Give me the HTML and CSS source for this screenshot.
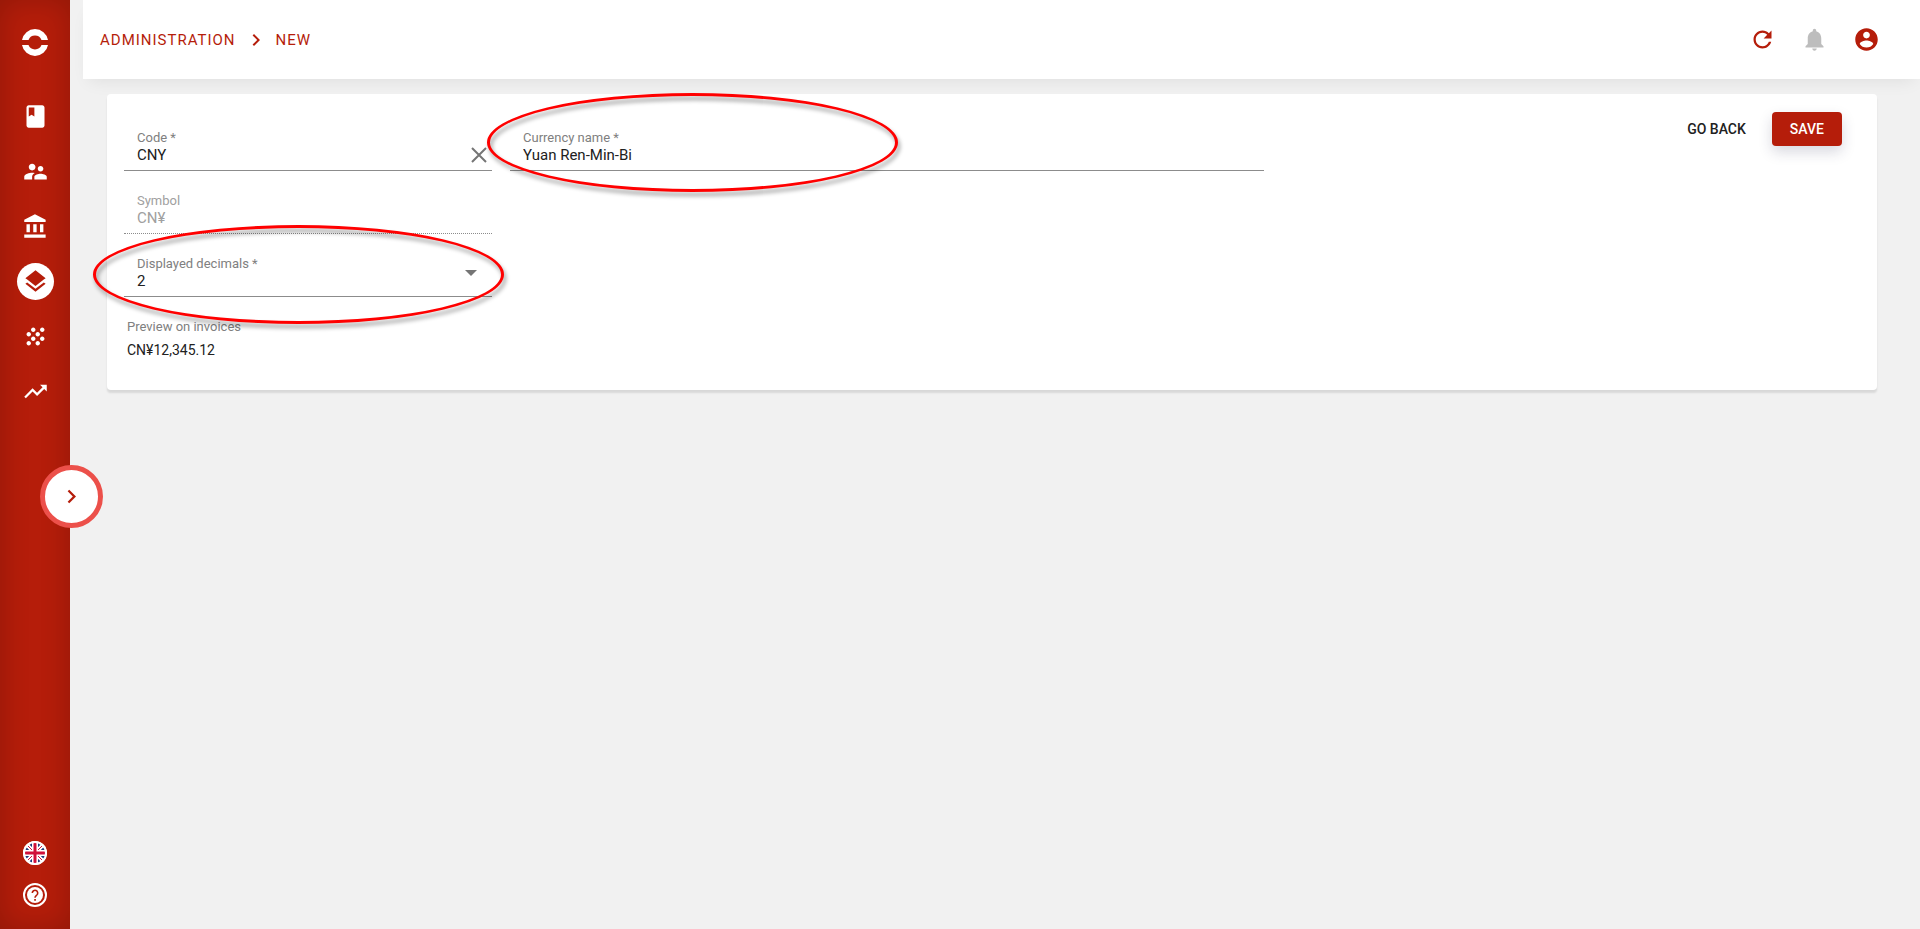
FILE: index.html
```
<!DOCTYPE html>
<html lang="en">
<head>
    <meta charset="UTF-8">
    <title>Administration - New currency</title>
    <link rel="stylesheet" href="styles.css">
</head>
<body>
    <aside class="sidebar">
        <a class="logo" href="#" aria-label="Home">
            <svg viewBox="0 0 28 28"><path d="M1 12a13.2 13.2 0 0 1 26 0h-6.500a7 7 0 0 0-13 0z"/><path d="M1 17a13.200 13.200 0 0 0 26 0h-6.500a7 7 0 0 1-13 0z"/></svg>
        </a>
        <nav class="menu">
            <a href="#" aria-label="Catalog">
                <svg class="icon" viewBox="0 0 24 24"><path fill-rule="evenodd" d="M18 2H6c-1.100 0-2 .9-2 2v16c0 1.100.9 2 2 2h12c1.100 0 2-.9 2-2V4c0-1.100-.9-2-2-2zM6 4h5v8l-2.500-1.500L6 12V4z"/></svg>
            </a>
            <a href="#" aria-label="Customers">
                <svg class="icon" viewBox="0 0 24 24"><path d="M16.500 12c1.380 0 2.490-1.120 2.490-2.500S17.880 7 16.500 7 14 8.120 14 9.500s1.120 2.500 2.500 2.500zM9 11c1.660 0 2.990-1.340 2.990-3S10.660 5 9 5 6 6.340 6 8s1.340 3 3 3zm7.500 3c-1.830 0-5.500.92-5.500 2.750V19h11v-2.250c0-1.830-3.670-2.750-5.500-2.750zM9 13c-2.330 0-7 1.170-7 3.500V19h7v-2.250c0-.85.33-2.340 2.370-3.470C10.500 13.100 9.660 13 9 13z"/></svg>
            </a>
            <a href="#" aria-label="Accounting">
                <svg class="icon" viewBox="0 0 24 24"><path d="M4 10v7h3v-7H4zm6 0v7h3v-7h-3zM2 22h19v-3H2v3zm14-12v7h3v-7h-3zm-4.500-9L2 6v2h19V6l-9.500-5z"/></svg>
            </a>
            <a class="active" href="#" aria-label="Administration">
                <svg class="icon" viewBox="0 0 24 24"><path d="M11.990 18.540l-7.370-5.730L3 14.070l9 7 9-7-1.630-1.270-7.380 5.740zM12 16l7.360-5.730L21 9l-9-7-9 7 1.630 1.270L12 16z"/></svg>
            </a>
            <a href="#" aria-label="Modules">
                <svg class="icon" viewBox="0 0 24 24"><path d="M10 12c-1.100 0-2 .9-2 2s.9 2 2 2 2-.9 2-2-.9-2-2-2zM6 8c-1.100 0-2 .9-2 2s.9 2 2 2 2-.9 2-2-.9-2-2-2zm0 8c-1.100 0-2 .9-2 2s.9 2 2 2 2-.9 2-2-.9-2-2-2zm12-8c1.100 0 2-.9 2-2s-.9-2-2-2-2 .9-2 2 .9 2 2 2zm-4 8c-1.100 0-2 .9-2 2s.9 2 2 2 2-.9 2-2-.9-2-2-2zm4-4c-1.100 0-2 .9-2 2s.9 2 2 2 2-.9 2-2-.9-2-2-2zm-4-4c-1.100 0-2 .9-2 2s.9 2 2 2 2-.9 2-2-.9-2-2-2zm-4-4c-1.100 0-2 .9-2 2s.9 2 2 2 2-.9 2-2-.9-2-2-2z"/></svg>
            </a>
            <a href="#" aria-label="Reports">
                <svg class="icon" viewBox="0 0 24 24"><path d="M16 6l2.290 2.290-4.880 4.880-4-4L2 16.590 3.410 18l6-6 4 4 6.300-6.290L22 12V6z"/></svg>
            </a>
        </nav>
        <div class="tools">
            <button type="button" aria-label="Language">
                <svg viewBox="0 0 24 24">
                    <clipPath id="round"><circle cx="12" cy="12" r="11"/></clipPath>
                    <circle cx="12" cy="12" r="12" fill="#fff"/>
                    <g clip-path="url(#round)">
                        <path fill="#1f3a7d" d="M0 0h24v24H0z"/>
                        <path stroke="#fff" stroke-width="4" d="M1 1l22 22M23 1L1 23"/>
                        <path stroke="#d0103a" stroke-width="1" d="M1 1l22 22M23 1L1 23"/>
                        <path stroke="#fff" stroke-width="6" d="M12 0v24M0 12h24"/>
                        <path stroke="#d0103a" stroke-width="3" d="M12 0v24M0 12h24"/>
                    </g>
                    <circle cx="12" cy="12" r="11" fill="none" stroke="#fff" stroke-width="2"/>
                </svg>
            </button>
            <button type="button" aria-label="Help">
                <svg viewBox="0 0 24 24">
                    <circle cx="12" cy="12" r="11" fill="none" stroke="#fff" stroke-width="2"/>
                    <circle cx="12" cy="12" r="8" fill="#fff"/>
                    <path fill="none" stroke="#b51d0a" stroke-width="1.600" d="M9.300 10a2.700 2.700 0 1 1 4.500 2c-1 .8-1.800 1.200-1.800 2.700"/>
                    <path fill="#b51d0a" d="M11.200 16h1.700v1.700h-1.700z"/>
                </svg>
            </button>
        </div>
        <button class="toggle" type="button" aria-label="Open menu">
            <svg class="icon" viewBox="0 0 24 24"><path d="M10 6L8.590 7.410 13.170 12l-4.580 4.590L10 18l6-6z"/></svg>
        </button>
    </aside>

    <div class="page">
        <header class="topbar">
            <div class="breadcrumb">
                <a href="#">ADMINISTRATION</a>
                <svg viewBox="0 0 24 24"><path d="M10 6L8.590 7.410 13.170 12l-4.580 4.590L10 18l6-6z"/></svg>
                <a href="#">NEW</a>
            </div>
            <div class="topbar-actions">
                <button type="button" aria-label="Refresh">
                    <svg class="icon" viewBox="0 0 24 24"><path d="M17.650 6.350C16.200 4.900 14.210 4 12 4c-4.420 0-7.990 3.580-7.990 8s3.570 8 7.990 8c3.730 0 6.840-2.550 7.730-6h-2.080c-.82 2.330-3.040 4-5.650 4-3.310 0-6-2.690-6-6s2.690-6 6-6c1.660 0 3.140.69 4.220 1.780L13 11h7V4l-2.350 2.350z"/></svg>
                </button>
                <button class="muted" type="button" aria-label="Notifications">
                    <svg class="icon" viewBox="0 0 24 24"><path d="M12 22c1.100 0 2-.9 2-2h-4c0 1.100.89 2 2 2zm6-6v-5c0-3.070-1.640-5.640-4.500-6.320V4c0-.83-.67-1.500-1.500-1.500s-1.500.67-1.500 1.500v.68C7.630 5.360 6 7.920 6 11v5l-2 2v1h16v-1l-2-2z"/></svg>
                </button>
                <button type="button" aria-label="Account">
                    <svg class="icon" viewBox="0 0 24 24"><path d="M12 2C6.480 2 2 6.480 2 12s4.480 10 10 10 10-4.480 10-10S17.520 2 12 2zm0 3c1.660 0 3 1.340 3 3s-1.340 3-3 3-3-1.340-3-3 1.340-3 3-3zm0 14.200c-2.500 0-4.710-1.280-6-3.220.03-1.990 4-3.080 6-3.080 1.990 0 5.970 1.090 6 3.080-1.290 1.940-3.500 3.220-6 3.220z"/></svg>
                </button>
            </div>
        </header>

        <main>
            <form class="card">
                <div class="fields">
                    <div class="field">
                        <label for="code">Code *</label>
                        <input id="code" type="text" value="CNY">
                        <button class="clear" type="button" aria-label="Clear code">
                            <svg viewBox="0 0 16 16"><path d="M1 1l14 14M15 1L1 15"/></svg>
                        </button>
                    </div>
                    <div class="field wide">
                        <label for="name">Currency name *</label>
                        <input id="name" type="text" value="Yuan Ren-Min-Bi">
                        <span class="highlight"></span>
                    </div>
                    <div class="field first">
                        <label for="symbol">Symbol</label>
                        <input id="symbol" type="text" value="CN¥" disabled>
                    </div>
                    <div class="field first">
                        <label for="decimals">Displayed decimals *</label>
                        <select id="decimals">
                            <option>0</option>
                            <option>1</option>
                            <option selected>2</option>
                            <option>3</option>
                        </select>
                        <span class="arrow"></span>
                        <span class="highlight"></span>
                    </div>
                    <div class="preview first">
                        <span class="preview-label">Preview on invoices</span>
                        <output for="symbol decimals">CN¥12,345.12</output>
                    </div>
                </div>
                <div class="actions">
                    <button class="btn" type="button">GO BACK</button>
                    <button class="btn save" type="submit">SAVE</button>
                </div>
            </form>
        </main>
    </div>
</body>
</html>
```
FILE: styles.css
```
*{box-sizing:border-box;}
body{display:flex;min-height:100vh;margin:0;background:#f1f1f1;font:14px/18px Roboto,"Liberation Sans",sans-serif;color:#212121;}
button{margin:0;padding:0;border:0;background:none;font:inherit;color:inherit;cursor:pointer;}
a{color:inherit;text-decoration:none;}
svg{display:block;fill:currentColor;}
.icon{width:27px;height:27px;}

/* sidebar */
.sidebar{position:sticky;top:0;z-index:2;display:flex;flex:none;flex-direction:column;align-items:center;width:70px;height:100vh;padding:28px 0 22px;background:#b51d0a;color:#fff;box-shadow:inset 0 0 30px rgba(0,0,0,.2);}
.logo svg{width:28px;height:28px;}
.menu{display:flex;flex-direction:column;gap:18px;margin-top:42px;}
.menu a{display:flex;align-items:center;justify-content:center;width:37px;height:37px;border-radius:50%;}
.menu .active{background:#fff;color:#b51d0a;}
.tools{display:flex;flex-direction:column;gap:18px;margin-top:auto;}
.tools svg{width:24px;height:24px;}
.toggle{position:absolute;top:50%;left:40px;display:flex;align-items:center;justify-content:center;width:63px;height:63px;border:5px solid #ec504a;border-radius:50%;background:#fff;color:#b51d0a;}

/* top bar */
.page{flex:1;min-width:0;padding-left:13px;}
.topbar{display:flex;align-items:center;justify-content:space-between;height:79px;padding:0 40px 0 17px;background:#fff;color:#b51d0a;box-shadow:0 8px 16px -6px rgba(0,0,0,.08);}
.breadcrumb{display:flex;align-items:center;gap:8px;font-size:15px;letter-spacing:1px;}
.breadcrumb svg{width:24px;height:24px;}
.topbar-actions{display:flex;gap:25px;}
.topbar-actions .muted{color:#bdbdbd;}

/* currency form */
.card{display:flex;gap:8px;margin:15px 43px 24px 24px;padding:0 17px;background:#fff;border-radius:4px;box-shadow:0 3px 2px rgba(0,0,0,.1);}
.fields{display:grid;flex:2;grid-template-columns:repeat(3,1fr);gap:22px 18px;padding:36px 0 31px;}
.field{position:relative;display:flex;flex-direction:column;}
.wide{grid-column:span 2;}
.first{grid-column:1;}
.field label,.preview-label{font-size:13px;line-height:16px;color:#808080;}
.field label{padding-left:13px;}
.field input,.field select{width:100%;height:25px;margin:0;padding:0 32px 6px 13px;border:0;border-bottom:1px solid #8c8c8c;border-radius:0;outline:0;background:none;appearance:none;font:15px/18px Roboto,"Liberation Sans",sans-serif;color:#212121;}
.field input:disabled{border-bottom-style:dotted;color:#a0a0a0;}
.field:has(input:disabled) label{color:#a0a0a0;}
.clear{position:absolute;right:5px;bottom:8px;}
.clear svg{width:16px;height:16px;fill:none;stroke:#757575;stroke-width:2;}
.arrow{position:absolute;right:15px;bottom:21px;border:6px solid transparent;border-top-color:#757575;border-bottom:0;pointer-events:none;}
.highlight{position:absolute;top:-37px;left:-23px;width:411px;height:99px;border:3px solid #f00;border-radius:50%;filter:drop-shadow(2px 4px 2px rgba(0,0,0,.4));pointer-events:none;}
.first .highlight{top:-31px;left:-31px;}
.preview{display:flex;flex-direction:column;gap:6px;padding-left:3px;}
.actions{display:flex;flex:1;align-items:flex-start;justify-content:flex-end;gap:8px;padding:18px 18px 0 0;}
.btn{height:34px;padding:0 18px;border-radius:4px;font-weight:500;}
.save{background:#b51d0a;color:#fff;box-shadow:0 6px 14px rgba(40,40,80,.18);}
```
